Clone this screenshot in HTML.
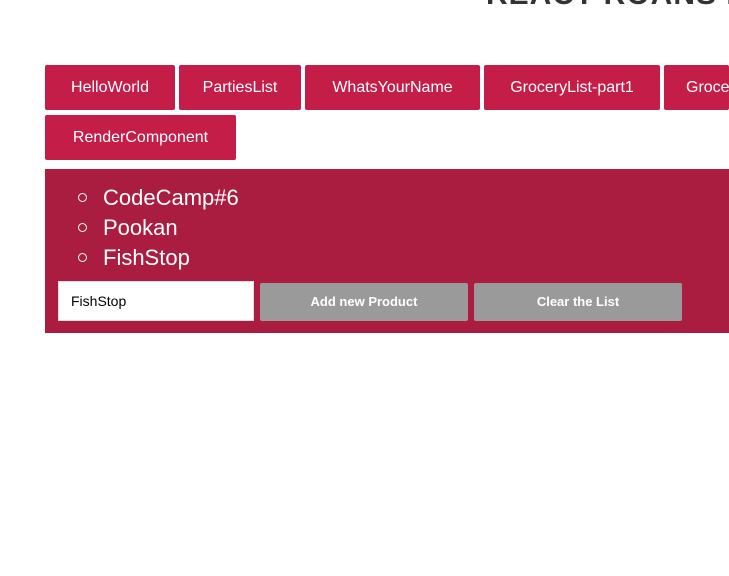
<!DOCTYPE html>
<html><head><style>
html,body{margin:0;padding:0}
#w{width:729px;height:576px;overflow:hidden;background:#fff;position:relative;font-family:"Liberation Sans",sans-serif}
.h{position:absolute;left:486px;top:-22px;font-size:30px;font-weight:bold;color:#333;white-space:nowrap;letter-spacing:1px}
.b{position:absolute;height:45px;background:#c41e48;color:#fff;font-size:16px;line-height:45px;text-align:center;border-radius:2px;white-space:nowrap;overflow:hidden}
.p{position:absolute;left:45px;top:169px;width:684px;height:164px;background:#aa1c40}
.li{position:absolute;left:33px;color:#fff;font-size:22px;line-height:30px;white-space:nowrap}
.li span{display:inline-block;width:9px;height:9px;border:1px solid #fff;border-radius:50%;margin:0 16px 0 0;vertical-align:3px;box-sizing:border-box}
.in{position:absolute;left:13px;top:112px;width:196px;height:40px;background:#fff;border:1px solid #ddd;box-sizing:border-box;font-size:14px;line-height:38px;padding-left:12px;color:#000}
.g{position:absolute;top:114px;width:208px;height:38px;background:#9a9a9a;color:#fff;font-weight:bold;font-size:13px;line-height:38px;text-align:center;border-radius:2px}
</style></head><body><div id="w">
<div class="h">REACT ROANS DY</div>
<div class="b" style="left:45px;top:65px;width:130px">HelloWorld</div>
<div class="b" style="left:179px;top:65px;width:122px">PartiesList</div>
<div class="b" style="left:305px;top:65px;width:175px">WhatsYourName</div>
<div class="b" style="left:484px;top:65px;width:176px">GroceryList-part1</div>
<div class="b" style="left:664px;top:65px;width:65px;text-align:left;padding-left:22px;box-sizing:border-box">GroceryList</div>
<div class="b" style="left:45px;top:115px;width:191px">RenderComponent</div>
<div class="p">
<div class="li" style="top:14px"><span></span>CodeCamp#6</div>
<div class="li" style="top:44px"><span></span>Pookan</div>
<div class="li" style="top:74px"><span></span>FishStop</div>
<div class="in">FishStop</div>
<div class="g" style="left:215px">Add new Product</div>
<div class="g" style="left:429px">Clear the List</div>
</div>
</div></body></html>
